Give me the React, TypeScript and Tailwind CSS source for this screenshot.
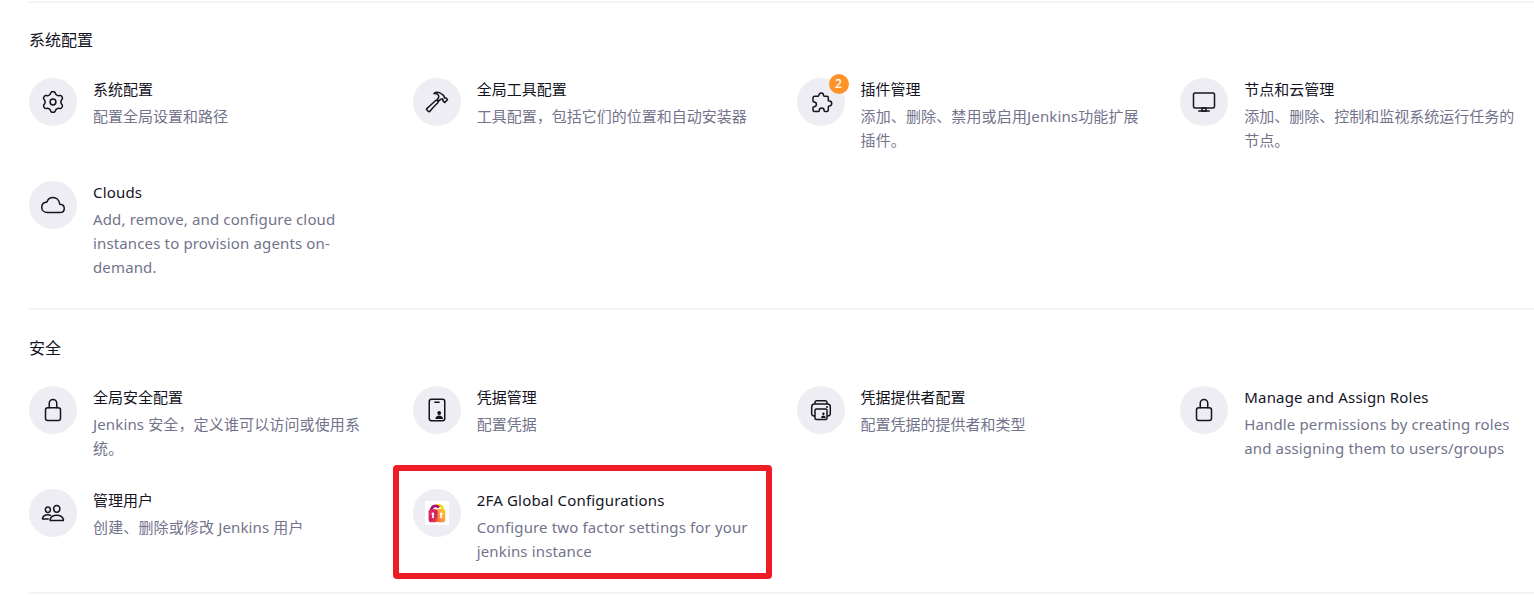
import type { ReactNode } from "react";
import {
  IoCloudOutline,
  IoHammerOutline,
  IoLockClosedOutline,
  IoPeopleOutline,
} from "react-icons/io5";

// Six-lobed outline of the settings gear, sampled around its centre.
const gearPoints = Array.from({ length: 120 }, (_, i) => {
  const angle = (i / 120) * Math.PI * 2;
  const lobe = Math.tanh(1.6 * Math.cos(6 * angle)) / Math.tanh(1.6);
  const radius = 9.15 + 1.2 * lobe;
  return `${(12 + radius * Math.sin(angle)).toFixed(2)},${(12 - radius * Math.cos(angle)).toFixed(2)}`;
}).join(" ");

function GearIcon() {
  return (
    <svg viewBox="0 0 24 24" className="size-6" fill="none" stroke="currentColor" strokeWidth="1.5" strokeLinejoin="round">
      <polygon points={gearPoints} />
      <circle cx="12" cy="12" r="2.9" />
    </svg>
  );
}

function PuzzleIcon() {
  return (
    <svg viewBox="0 0 24 24" className="size-6" fill="none" stroke="currentColor" strokeWidth="1.5" strokeLinejoin="round">
      <path d="M5.500 6.300H9c.7 0 .9-.4.9-1a2.300 2.300 0 0 1 4.600 0c0 .6.2 1 .9 1h2.400a1.500 1.500 0 0 1 1.500 1.500v2.400c0 .7.4.9 1 .9a2.400 2.400 0 0 1 0 4.800c-.6 0-1 .2-1 .9v3.200a1.500 1.500 0 0 1-1.500 1.500h-1.800c-.7 0-.9-.4-.9-1a2.400 2.400 0 0 0-4.800 0c0 .6-.2 1-.9 1H5.500A1.500 1.500 0 0 1 4 20v-2.400c0-.7.4-.9 1-.9a2.400 2.400 0 0 0 0-4.800c-.6 0-1-.2-1-.9V7.800a1.500 1.500 0 0 1 1.500-1.500z" />
    </svg>
  );
}

function ComputerIcon() {
  return (
    <svg viewBox="0 0 512 512" className="size-6" fill="none" stroke="currentColor" strokeWidth="32" strokeLinejoin="round" strokeLinecap="round">
      <rect x="32" y="64" width="448" height="320" rx="32" />
      <path d="M304 448l-8-64h-80l-8 64z" />
      <path d="M368 448H144" />
    </svg>
  );
}

function CredentialsIcon() {
  return (
    <svg viewBox="0 0 24 24" className="size-6" fill="none" stroke="currentColor" strokeWidth="1.5" strokeLinecap="round">
      <rect x="4.25" y="1.25" width="15.5" height="21.5" rx="2.2" />
      <path d="M9.9 4.2h4.2" />
      <circle cx="14.2" cy="15" r="1.9" fill="currentColor" stroke="none" />
      <path d="M10.4 20.9c0-2 1.7-3.3 3.8-3.3s3.8 1.3 3.8 3.3z" fill="currentColor" stroke="none" />
    </svg>
  );
}

function ProviderIcon() {
  return (
    <svg viewBox="0 0 24 24" className="size-6" fill="none" stroke="currentColor" strokeWidth="1.5" strokeLinejoin="round">
      <path d="M6 18H5a2.3 2.3 0 0 1-2.3-2.3V8.9A2.9 2.9 0 0 1 5.600 6h12.800a2.900 2.900 0 0 1 2.900 2.900v6.800A2.300 2.300 0 0 1 19 18h-1" />
      <path d="M6 6V4.700A2 2 0 0 1 8 2.750h8a2 2 0 0 1 2 1.950V6" />
      <rect x="6" y="11" width="12" height="10.500" rx="1.300" />
      <circle cx="18" cy="9" r="1" fill="currentColor" stroke="none" />
      <circle cx="14.400" cy="15.800" r="1.200" fill="currentColor" stroke="none" />
      <path d="M12.100 20c0-1.600 1-2.500 2.300-2.500s2.300.9 2.300 2.500z" fill="currentColor" stroke="none" />
    </svg>
  );
}

function TwoFactorIcon() {
  return (
    <svg viewBox="0 0 24 24" className="size-6">
      <defs>
        <linearGradient id="lock-left" x1="0" y1="0" x2="1" y2="1">
          <stop offset="0" stopColor="#f0304e" />
          <stop offset="0.5" stopColor="#d01c62" />
          <stop offset="1" stopColor="#f5503e" />
        </linearGradient>
        <linearGradient id="lock-right" x1="1" y1="0" x2="0" y2="1">
          <stop offset="0" stopColor="#fdd028" />
          <stop offset="1" stopColor="#ff6a45" />
        </linearGradient>
      </defs>
      <rect width="24" height="24" fill="#fff" />
      <path d="M11 5.500c3.300-2.300 6.500-.6 6.700 3.300" fill="none" stroke="#fbd81c" strokeWidth="2.800" />
      <rect x="11.500" y="8" width="8.800" height="13.300" rx="2.300" fill="url(#lock-right)" />
      <path d="M6.200 9.600C6.500 5.400 10.500 3.300 14 6.500" fill="none" stroke="#a60f70" strokeWidth="2.800" />
      <rect x="3.600" y="8.300" width="9" height="13" rx="2.300" fill="url(#lock-left)" />
      <g fill="#fff">
        <circle cx="7.900" cy="13" r="1.400" />
        <path d="M7.300 13h1.200l.5 4H6.800z" />
        <circle cx="16.200" cy="13" r="1.400" />
        <path d="M15.600 13h1.200l.5 4h-2.200z" />
      </g>
    </svg>
  );
}

type ItemProps = {
  icon: ReactNode;
  title: string;
  text: string;
  badge?: number;
  highlighted?: boolean;
};

// Text holding Latin words is set slightly looser than pure Chinese text.
const hasLatin = (text: string) => /[A-Za-z]/.test(text);

function Item({ icon, title, text, badge, highlighted }: ItemProps) {
  return (
    <a className="relative flex min-h-[75px] gap-4">
      <span className="relative flex size-12 shrink-0 items-center justify-center rounded-full bg-[#ededf3] text-[#14141f]">
        {icon}
        {badge !== undefined && (
          <span className="absolute -top-1 -right-1 flex size-5 items-center justify-center rounded-full bg-[#fe9429] text-[12px] leading-none font-medium text-white">
            {badge}
          </span>
        )}
      </span>
      <div className="-mt-px w-[281px] text-[15px] leading-6">
        <h3 className={hasLatin(title) ? "mb-[3px] tracking-[0.18px] text-[#14141f]" : "mb-[3px] text-[#14141f]"}>
          {title}
        </h3>
        <p className={hasLatin(text) ? "tracking-[0.14px] text-[#73738c]" : "text-[#73738c]"}>{text}</p>
      </div>
      {highlighted && (
        <span className="absolute -top-6 -left-5 h-[114px] w-[379px] rounded-[4px] border-[6px] border-[#ee1c25]" />
      )}
    </a>
  );
}

function Section({ title, items, className }: { title: string; items: ItemProps[]; className: string }) {
  return (
    <section className={className}>
      <h2 className="mb-[26px] text-[16px] leading-6 text-[#14141f]">{title}</h2>
      <div className="grid grid-cols-[repeat(4,383.75px)] gap-y-7">
        {items.map((item) => (
          <Item key={item.title} {...item} />
        ))}
      </div>
    </section>
  );
}

const configuration: ItemProps[] = [
  { icon: <GearIcon />, title: "系统配置", text: "配置全局设置和路径" },
  { icon: <IoHammerOutline className="size-6" />, title: "全局工具配置", text: "工具配置，包括它们的位置和自动安装器" },
  { icon: <PuzzleIcon />, title: "插件管理", text: "添加、删除、禁用或启用Jenkins功能扩展插件。", badge: 2 },
  { icon: <ComputerIcon />, title: "节点和云管理", text: "添加、删除、控制和监视系统运行任务的节点。" },
  { icon: <IoCloudOutline className="size-6" />, title: "Clouds", text: "Add, remove, and configure cloud instances to provision agents on-demand." },
];

const security: ItemProps[] = [
  { icon: <IoLockClosedOutline className="size-6" />, title: "全局安全配置", text: "Jenkins 安全，定义谁可以访问或使用系统。" },
  { icon: <CredentialsIcon />, title: "凭据管理", text: "配置凭据" },
  { icon: <ProviderIcon />, title: "凭据提供者配置", text: "配置凭据的提供者和类型" },
  { icon: <IoLockClosedOutline className="size-6" />, title: "Manage and Assign Roles", text: "Handle permissions by creating roles and assigning them to users/groups" },
  { icon: <IoPeopleOutline className="size-6" />, title: "管理用户", text: "创建、删除或修改 Jenkins 用户" },
  { icon: <TwoFactorIcon />, title: "2FA Global Configurations", text: "Configure two factor settings for your jenkins instance", highlighted: true },
];

export default function App() {
  return (
    <main className="h-[597px] overflow-hidden bg-white pt-px pl-[29px] font-['Noto_Sans','Noto_Sans_CJK_SC',sans-serif]">
      <Section className="h-[307px] border-t-2 border-[#f3f3f8] pt-[25px]" title="系统配置" items={configuration} />
      <Section className="h-[284px] border-t-2 border-[#f3f3f8] pt-[26px]" title="安全" items={security} />
      <div className="border-t-2 border-[#f3f3f8]" />
    </main>
  );
}
